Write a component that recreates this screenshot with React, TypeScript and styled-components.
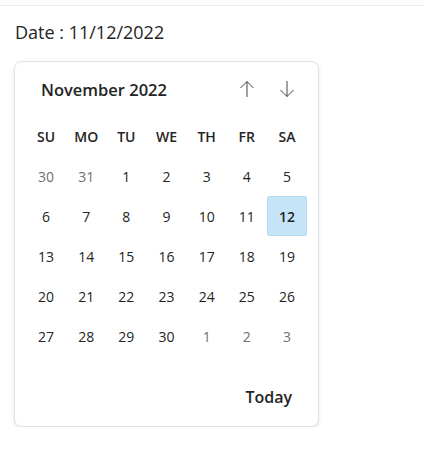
import React from 'react';
import styled, { createGlobalStyle } from 'styled-components';

const GlobalStyle = createGlobalStyle`
  body {
    margin: 0;
    background: #ffffff;
    font-family: 'Open Sans', 'Noto Sans', sans-serif;
    color: #242424;
  }
`;

const Page = styled.div`
  padding-top: 5px;
`;

const TopRule = styled.div`
  height: 1px;
  background: #ebebeb;
`;

const DateLabel = styled.div`
  margin: 14px 0 0 15px;
  font-size: 18px;
  line-height: 24px;
  color: #242424;
`;

const Card = styled.div`
  margin: 17px 0 0 14px;
  width: 305px;
  box-sizing: border-box;
  padding: 0 11px;
  border: 1px solid #e3e3e3;
  border-radius: 8px;
  box-shadow: 0 2px 4px rgba(0, 0, 0, 0.1);
  background: #fff;
`;

const Header = styled.div`
  height: 54px;
  display: grid;
  grid-template-columns: 1fr 40px 40px;
  align-items: center;
`;

const Title = styled.div`
  padding-left: 15px;
  font-size: 16.5px;
  font-weight: 600;
`;

const NavButton = styled.button`
  border: none;
  background: none;
  padding: 0;
  height: 40px;
  display: flex;
  align-items: center;
  justify-content: center;
  color: #424242;
  cursor: pointer;
`;

const Grid = styled.div`
  display: grid;
  grid-template-columns: repeat(7, 1fr);
  grid-auto-rows: 40px;
`;

const DayName = styled.div`
  display: flex;
  align-items: center;
  justify-content: center;
  font-size: 14px;
  font-weight: 600;
`;

const Day = styled.div<{ $other?: boolean; $selected?: boolean }>`
  display: flex;
  align-items: center;
  justify-content: center;
  font-size: 14px;
  font-weight: ${(p) => (p.$selected ? 600 : 400)};
  color: ${(p) => (p.$other ? '#707070' : '#242424')};
  background: ${(p) => (p.$selected ? '#c5e4f7' : 'transparent')};
  border: 1px solid ${(p) => (p.$selected ? '#b6ddf5' : 'transparent')};
  border-radius: 2px;
`;

const Footer = styled.div`
  height: 70px;
  display: flex;
  align-items: center;
  justify-content: flex-end;
  padding: 12px 15px 0 0;
  box-sizing: border-box;
`;

const TodayButton = styled.button`
  border: none;
  background: none;
  font-family: inherit;
  font-size: 16px;
  font-weight: 600;
  color: #242424;
  padding: 0;
  cursor: pointer;
`;

const Arrow = ({ down }: { down?: boolean }) => (
  <svg width="16" height="18" viewBox="0 0 16 18" fill="none" stroke="currentColor" strokeWidth="1"
    style={down ? { transform: 'rotate(180deg)' } : undefined}>
    <path d="M8 1.5V17M1.5 8L8 1.5L14.5 8" />
  </svg>
);

const dayNames = ['SU', 'MO', 'TU', 'WE', 'TH', 'FR', 'SA'];

const days: { n: number; other?: boolean }[] = [
  { n: 30, other: true }, { n: 31, other: true },
  ...Array.from({ length: 30 }, (_, i) => ({ n: i + 1 })),
  { n: 1, other: true }, { n: 2, other: true }, { n: 3, other: true },
];

export default function App() {
  return (
    <Page>
      <GlobalStyle />
      <TopRule />
      <DateLabel>Date : 11/12/2022</DateLabel>
      <Card>
        <Header>
          <Title>November 2022</Title>
          <NavButton aria-label="previous"><Arrow /></NavButton>
          <NavButton aria-label="next"><Arrow down /></NavButton>
        </Header>
        <Grid>
          {dayNames.map((d) => <DayName key={d}>{d}</DayName>)}
          {days.map((d, i) => (
            <Day key={i} $other={d.other} $selected={!d.other && d.n === 12}>{d.n}</Day>
          ))}
        </Grid>
        <Footer>
          <TodayButton>Today</TodayButton>
        </Footer>
      </Card>
    </Page>
  );
}
